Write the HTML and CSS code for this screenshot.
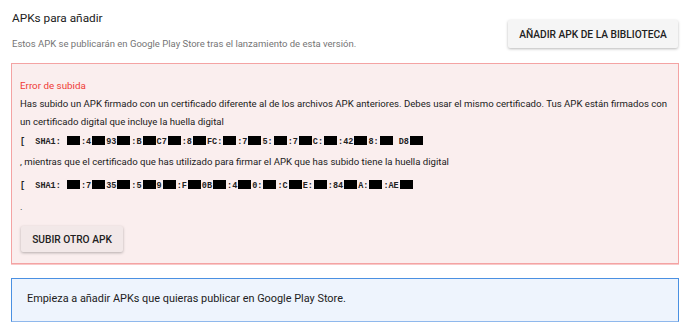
FILE: index.html
```html
<!DOCTYPE html>
<html lang="es">
<head>
<meta charset="utf-8">
<title>APKs para añadir</title>
<link rel="stylesheet" href="styles.css">
</head>
<body>
<div class="page">
  <div class="header">
    <div class="head-text">
      <h2 class="title">APKs para añadir</h2>
      <p class="subtitle">Estos APK se publicarán en Google Play Store tras el lanzamiento de esta versión.</p>
    </div>
    <button class="btn btn-lib">AÑADIR APK DE LA BIBLIOTECA</button>
  </div>

  <div class="error-box">
    <div class="error-title">Error de subida</div>
    <p class="body">Has subido un APK firmado con un certificado diferente al de los archivos APK anteriores. Debes usar el mismo certificado. Tus APK están firmados con un certificado digital que incluye la huella digital</p>
    <p class="sha sha1">[&nbsp; SHA1: <span class="r"></span>:4<span class="r"></span>93<span class="r"></span>:B<span class="r"></span>C7<span class="r"></span>:8<span class="r"></span>FC:<span class="r"></span>:7<span class="r"></span>5:<span class="r"></span>:7<span class="r"></span>C:<span class="r"></span>:42<span class="r"></span>8:<span class="r"></span> D8<span class="r"></span></p>
    <p class="body mid">, mientras que el certificado que has utilizado para firmar el APK que has subido tiene la huella digital</p>
    <p class="sha sha2">[&nbsp; SHA1: <span class="r"></span>:7<span class="r"></span>35<span class="r"></span>:5<span class="r"></span>9<span class="r"></span>:F<span class="r"></span>0B<span class="r"></span>:4<span class="r"></span>0:<span class="r"></span>:C<span class="r"></span>E:<span class="r"></span>:84<span class="r"></span>A:<span class="r"></span>:AE<span class="r"></span></p>
    <p class="body dot">.</p>
    <button class="btn btn-up">SUBIR OTRO APK</button>
  </div>

  <div class="info-box">Empieza a añadir APKs que quieras publicar en Google Play Store.</div>
</div>
</body>
</html>
```

FILE: styles.css
```css
html, body {
  margin: 0;
  padding: 0;
  background: #ffffff;
}

body {
  font-family: Roboto, "Liberation Sans", Arial, sans-serif;
  color: #212121;
}

.page {
  padding: 8px 11px 0 11px;
}

.header {
  display: flex;
  justify-content: space-between;
  align-items: center;
  padding-right: 1px;
}

.title {
  margin: 0;
  font-size: 11.8px;
  font-weight: 400;
  line-height: 20px;
  color: #212121;
  padding-left: 1px;
}

.subtitle {
  margin: 8px 0 0 0;
  font-size: 9.5px;
  line-height: 16px;
  color: #757575;
  padding-left: 1px;
}

.btn {
  font-family: Roboto, "Liberation Sans", Arial, sans-serif;
  font-weight: 500;
  font-size: 10.2px;
  color: #212121;
  border: none;
  border-radius: 2px;
  cursor: pointer;
  box-shadow: 0 1px 3px rgba(0, 0, 0, 0.28);
}

.btn-lib {
  margin-top: 8px;
  height: 28px;
  width: 170px;
  padding: 0;
  background: #f5f5f5;
}

.error-box {
  margin-top: 11px;
  border: 1px solid #f4a3a3;
  background: #faeeee;
  padding: 13px 4px 11px 8px;
  box-shadow: 0 1px 0 rgba(244, 163, 163, 0.6);
}

.error-title {
  font-size: 9.8px;
  line-height: 18px;
  color: #ef3b36;
}

.body {
  margin: 0;
  font-size: 9.6px;
  line-height: 18px;
  color: #212121;
}

.sha {
  margin: 2px 0 0 0;
  font-family: "Liberation Mono", "DejaVu Sans Mono", monospace;
  font-size: 8.5px;
  font-weight: 700;
  line-height: 18px;
  color: #222222;
  white-space: nowrap;
}

.sha2 {
  margin-top: 6px;
}

.r {
  display: inline-block;
  width: 13px;
  height: 9px;
  background: #000000;
  vertical-align: -1px;
  margin: 0 1px;
}

.mid {
  margin-top: 2px;
}

.dot {
  margin-top: 3px;
}

.btn-up {
  display: block;
  margin: 10px 0 0 1px;
  height: 26px;
  width: 102px;
  padding: 0;
  background: #f2e8e8;
}

.info-box {
  margin-top: 14px;
  border: 1px solid #4a90e2;
  border-bottom-color: #8fb8ec;
  background: #eef4fd;
  padding: 12px 15px 14px 15px;
  font-size: 10.9px;
  line-height: 16px;
  color: #212121;
  box-shadow: 0 1px 0 rgba(143, 184, 236, 0.5);
}
```
